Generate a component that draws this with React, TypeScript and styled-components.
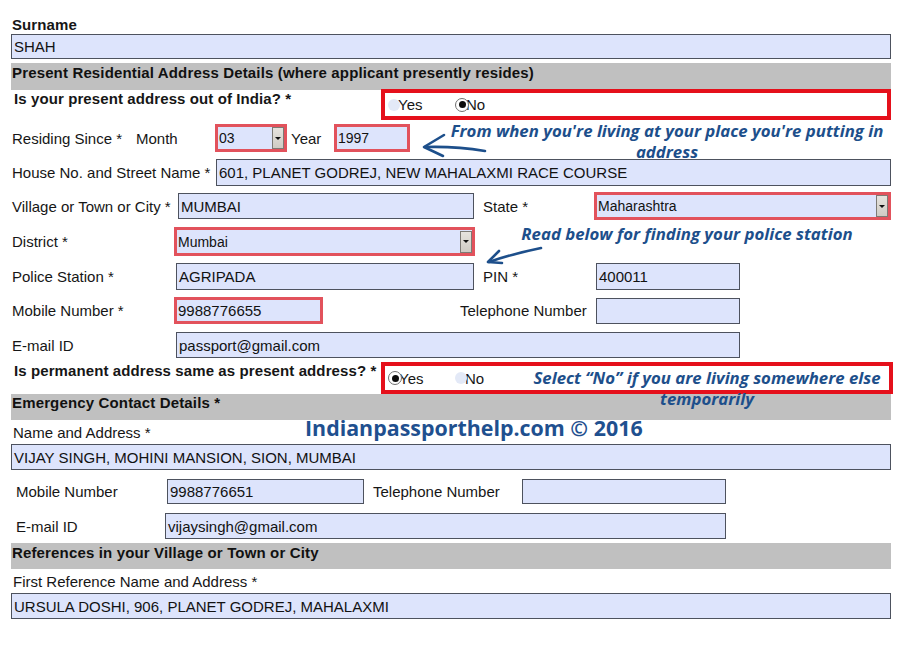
import React from 'react';
import styled, { createGlobalStyle } from 'styled-components';

const GlobalStyle = createGlobalStyle`
  body {
    margin: 0;
    background: #ffffff;
  }
`;

const Page = styled.div`
  position: relative;
  width: 906px;
  height: 656px;
  overflow: hidden;
  background: #ffffff;
  font-family: "Liberation Sans", Arial, sans-serif;
  font-size: 15px;
  color: #161616;
`;

const Form = styled.div`
  display: flex;
  flex-direction: column;
  width: 880px;
  margin-left: 11px;
`;

const Row = styled.div<{ $h: number; $mt?: number }>`
  display: flex;
  align-items: center;
  height: ${p => p.$h}px;
  margin-top: ${p => p.$mt ?? 0}px;
`;

const Label = styled.div<{ $w?: number; $pl?: number; $bold?: boolean; $top?: number }>`
  flex: none;
  width: ${p => (p.$w ? `${p.$w}px` : 'auto')};
  padding-left: ${p => p.$pl ?? 1}px;
  box-sizing: border-box;
  font-weight: ${p => (p.$bold ? 700 : 400)};
  letter-spacing: ${p => (p.$bold ? '0.1px' : 'normal')};
  line-height: 17px;
  white-space: nowrap;
  ${p => (p.$top !== undefined ? `align-self: flex-start; padding-top: ${p.$top}px;` : '')}
`;

const Band = styled.div<{ $h: number; $lh: number; $mt?: number }>`
  height: ${p => p.$h}px;
  margin-top: ${p => p.$mt ?? 0}px;
  background: #c0c0c0;
  padding-left: 1px;
  font-weight: 700;
  letter-spacing: 0.15px;
  line-height: ${p => p.$lh}px;
  color: #111;
  white-space: nowrap;
`;

const Field = styled.div<{ $w: number; $h?: number; $alert?: boolean; $small?: boolean }>`
  flex: none;
  display: flex;
  align-items: center;
  width: ${p => p.$w}px;
  height: ${p => (p.$h ? `${p.$h}px` : '100%')};
  box-sizing: border-box;
  background: #dde4fc;
  border: ${p => (p.$alert ? '3px solid #e2525c' : '1px solid #4d525e')};
  padding-left: ${p => (p.$alert ? 1 : 2)}px;
  font-size: ${p => (p.$small ? 14 : 15)}px;
  color: #121212;
  white-space: nowrap;
  overflow: hidden;
`;

const DropButton = styled.span`
  flex: none;
  margin-left: auto;
  width: 12px;
  height: 22px;
  box-sizing: border-box;
  display: flex;
  align-items: center;
  justify-content: center;
  background: linear-gradient(#e6e3de, #cfcbc4);
  border: 1px solid #7d7a75;

  &::after {
    content: '';
    border-left: 3px solid transparent;
    border-right: 3px solid transparent;
    border-top: 3px solid #111;
  }
`;

const ChoiceBox = styled.div<{ $w: number }>`
  flex: none;
  display: flex;
  align-items: center;
  width: ${p => p.$w}px;
  height: 100%;
  box-sizing: border-box;
  border: 4px solid #e5101b;
  background: #ffffff;
  padding-left: 3px;
`;

const Option = styled.span`
  display: flex;
  align-items: center;
  width: 67px;
  font-size: 15px;
`;

const Dot = styled.span<{ $on?: boolean }>`
  flex: none;
  position: relative;
  width: ${p => (p.$on ? 14 : 12)}px;
  height: ${p => (p.$on ? 14 : 12)}px;
  margin-right: ${p => (p.$on ? -3 : -2)}px;
  border-radius: 50%;
  box-sizing: border-box;
  background: ${p => (p.$on ? '#ffffff' : '#e3e9f7')};
  border: ${p => (p.$on ? '1px solid #707070' : 'none')};

  &::after {
    content: '';
    display: ${p => (p.$on ? 'block' : 'none')};
    position: absolute;
    left: 2.5px;
    top: 2.5px;
    width: 7px;
    height: 7px;
    border-radius: 50%;
    background: #0c0c0c;
  }
`;

const Note = styled.div<{ $x: number; $y: number; $w: number }>`
  position: absolute;
  left: ${p => p.$x}px;
  top: ${p => p.$y}px;
  width: ${p => p.$w}px;
  text-align: center;
  font-family: "Open Sans", Lato, sans-serif;
  font-style: italic;
  font-weight: 700;
  font-size: 16.8px;
  line-height: 21px;
  color: #1d4f8b;
  white-space: nowrap;
`;

const Watermark = styled.div`
  position: absolute;
  left: 305px;
  top: 414px;
  font-family: "Open Sans", Lato, sans-serif;
  font-weight: 700;
  font-size: 21.4px;
  line-height: 28px;
  color: #1f508f;
  white-space: nowrap;
`;

const Arrows = styled.svg`
  position: absolute;
  left: 0;
  top: 0;
  pointer-events: none;
`;

const Select = ({ w, value, h }: { w: number; value: string; h?: number }) => (
  <Field $w={w} $h={h} $alert $small>
    {value}
    <DropButton />
  </Field>
);

const Radio = ({ label, on }: { label: string; on?: boolean }) => (
  <Option>
    <Dot $on={on} />
    {label}
  </Option>
);

export default function App() {
  return (
    <Page>
      <GlobalStyle />
      <Form>
        <Row $h={20} $mt={14}>
          <Label $bold>Surname</Label>
        </Row>
        <Row $h={25}>
          <Field $w={880}>SHAH</Field>
        </Row>
        <Band $h={27} $lh={20} $mt={4}>
          Present Residential Address Details (where applicant presently resides)
        </Band>

        <Row $h={31} $mt={-1}>
          <Label $w={370} $pl={3} $bold $top={1}>
            Is your present address out of India? *
          </Label>
          <ChoiceBox $w={510}>
            <Radio label="Yes" />
            <Radio label="No" on />
          </ChoiceBox>
        </Row>

        <Row $h={28} $mt={4}>
          <Label $w={125}>Residing Since *</Label>
          <Label $w={79} $pl={0}>Month</Label>
          <Select w={72} value="03" />
          <Label $w={47} $pl={4}>Year</Label>
          <Field $w={76} $alert $small>1997</Field>
        </Row>

        <Row $h={27} $mt={7}>
          <Label $w={205}>House No. and Street Name *</Label>
          <Field $w={675}>601, PLANET GODREJ, NEW MAHALAXMI RACE COURSE</Field>
        </Row>

        <Row $h={28} $mt={6}>
          <Label $w={167}>Village or Town or City *</Label>
          <Field $w={296} $h={26}>MUMBAI</Field>
          <Label $w={120} $pl={9}>State *</Label>
          <Select w={297} value="Maharashtra" />
        </Row>

        <Row $h={29} $mt={7}>
          <Label $w={163}>District *</Label>
          <Select w={301} value="Mumbai" />
        </Row>

        <Row $h={27} $mt={7}>
          <Label $w={165}>Police Station *</Label>
          <Field $w={298}>AGRIPADA</Field>
          <Label $w={122} $pl={9}>PIN *</Label>
          <Field $w={144}>400011</Field>
        </Row>

        <Row $h={27} $mt={7}>
          <Label $w={163}>Mobile Number *</Label>
          <Field $w={149} $alert>9988776655</Field>
          <Label $w={273} $pl={137}>Telephone Number</Label>
          <Field $w={144} $h={26} />
        </Row>

        <Row $h={26} $mt={8}>
          <Label $w={165}>E-mail ID</Label>
          <Field $w={564}>passport@gmail.com</Field>
        </Row>

        <Row $h={32} $mt={4}>
          <Label $w={370} $pl={3} $bold $top={0}>
            Is permanent address same as present address? *
          </Label>
          <ChoiceBox $w={512}>
            <Radio label="Yes" on />
            <Radio label="No" />
          </ChoiceBox>
        </Row>

        <Band $h={26} $lh={18}>Emergency Contact Details *</Band>

        <Row $h={24}>
          <Label $pl={2}>Name and Address *</Label>
        </Row>
        <Row $h={26}>
          <Field $w={880}>VIJAY SINGH, MOHINI MANSION, SION, MUMBAI</Field>
        </Row>

        <Row $h={25} $mt={9}>
          <Label $w={156} $pl={5}>Mobile Number</Label>
          <Field $w={197}>9988776651</Field>
          <Label $w={158} $pl={9}>Telephone Number</Label>
          <Field $w={204} />
        </Row>

        <Row $h={26} $mt={9}>
          <Label $w={154} $pl={5}>E-mail ID</Label>
          <Field $w={561}>vijaysingh@gmail.com</Field>
        </Row>

        <Band $h={26} $lh={20} $mt={4}>
          References in your Village or Town or City
        </Band>

        <Row $h={24}>
          <Label $pl={2}>First Reference Name and Address *</Label>
        </Row>
        <Row $h={26}>
          <Field $w={880}>URSULA DOSHI, 906, PLANET GODREJ, MAHALAXMI</Field>
        </Row>
      </Form>

      <Note $x={446} $y={120} $w={442}>
        From when you're living at your place you're putting in
        <br />
        address
      </Note>
      <Note $x={516} $y={223} $w={342}>
        Read below for finding your police station
      </Note>
      <Note $x={527} $y={367} $w={360}>
        Select “No” if you are living somewhere else
        <br />
        temporarily
      </Note>
      <Watermark>Indianpassporthelp.com © 2016</Watermark>

      <Arrows width={906} height={656} viewBox="0 0 906 656">
        <g fill="none" stroke="#1d4f8b" strokeWidth={2.6} strokeLinecap="round" strokeLinejoin="round">
          <path d="M485 151 Q455 146 425 147" />
          <path d="M444 135 L424 147 L443 156" />
          <path d="M541 248 Q512 254 489 262" />
          <path d="M499 251 L488 262 L502 263" />
        </g>
      </Arrows>
    </Page>
  );
}
